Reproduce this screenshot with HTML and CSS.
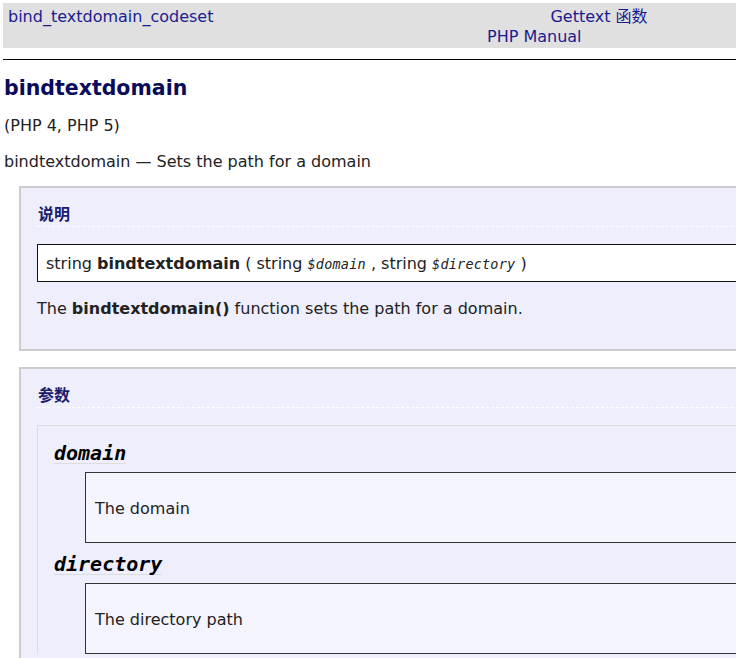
FILE: index.html
```html
<!DOCTYPE html>
<html lang="zh">
<head>
<meta charset="utf-8">
<title>bindtextdomain</title>
<link rel="stylesheet" href="styles.css">
</head>
<body>
<div class="page">
  <div class="navbar">
    <div class="nav-row">
      <a class="nav-prev" href="#">bind_textdomain_codeset</a>
      <a class="nav-up" href="#">Gettext 函数</a>
    </div>
    <div class="nav-row">
      <a class="nav-home" href="#">PHP Manual</a>
    </div>
  </div>
  <hr class="rule">
  <h1 class="title">bindtextdomain</h1>
  <p class="verinfo">(PHP 4, PHP 5)</p>
  <p class="refpurpose">bindtextdomain — Sets the path for a domain</p>

  <div class="refsect">
    <h3 class="sect-title">说明</h3>
    <div class="methodsynopsis">string <b>bindtextdomain</b> ( string <span class="var">$domain</span> , string <span class="var">$directory</span> )</div>
    <p class="para">The <b>bindtextdomain()</b> function sets the path for a domain.</p>
  </div>

  <div class="refsect">
    <h3 class="sect-title">参数</h3>
    <div class="params">
      <div class="term"><span class="parameter">domain</span></div>
      <div class="listitem">The domain</div>
      <div class="term"><span class="parameter">directory</span></div>
      <div class="listitem">The directory path</div>
    </div>
  </div>
</div>
</body>
</html>
```

FILE: styles.css
```css
html {
  overflow: hidden;
}
body {
  margin: 0;
  padding: 3px;
  font-family: "DejaVu Sans", "Noto Sans CJK SC", sans-serif;
  font-size: 16px;
  line-height: 20px;
  color: #222;
  background: #fff;
}
.page {
  width: 1060px;
}
a {
  color: #1b1b8f;
  text-decoration: none;
}
.navbar {
  background: #e0e0e0;
  padding: 4px 0 1px 5px;
}
.nav-row {
  display: flex;
  height: 20px;
}
.nav-up {
  margin-left: 337px;
}
.nav-home {
  margin-left: 479px;
}
.rule {
  margin: 11px 0 0 0;
  border: 0;
  border-top: 1px solid #000;
  height: 0;
}
.title {
  margin: 14px 0 0 1px;
  font-size: 20.5px;
  line-height: 28px;
  color: #0b0b5b;
  font-weight: bold;
}
.verinfo {
  margin: 14px 0 0 1px;
}
.refpurpose {
  margin: 16px 0 0 1px;
}
.refsect {
  margin: 14px 0 0 16px;
  border: 2px solid #cccccc;
  border-right: 0;
  background: #eeeefc;
  padding: 17px 0 30px 16px;
}
.refsect + .refsect {
  margin-top: 16px;
}
.sect-title {
  margin: 0;
  font-size: 16px;
  line-height: 20px;
  font-weight: bold;
  color: #1c1c6c;
  padding: 0 0 1px 1px;
  border-bottom: 1px dashed #ffffff;
}
.methodsynopsis {
  margin-top: 17px;
  background: #fff;
  border: 1px solid #111;
  border-right: 0;
  height: 20px;
  padding: 9px 8px 7px 8px;
}
.var {
  font-family: "DejaVu Sans Mono", monospace;
  font-style: italic;
  font-size: 13.5px;
  line-height: 1;
  letter-spacing: 0.2px;
}
.para {
  margin: 17px 0 0 0;
}
.params {
  margin-top: 17px;
  border-top: 1px solid #dddddd;
  border-left: 1px solid #dddddd;
  background: #eeeefc;
  padding: 17px 0 0 16px;
}
.term {
  line-height: 20px;
}
.parameter {
  display: inline-block;
  font-family: "DejaVu Sans Mono", monospace;
  font-weight: bold;
  font-style: italic;
  font-size: 20px;
  line-height: 20px;
  color: #000;
  border-bottom: 1px solid #dddddd;
}
.listitem {
  margin: 7px 0 11px 31px;
  background: #f4f4fe;
  border: 1px solid #333;
  border-right: 0;
  padding: 26px 9px 23px 9px;
}
```
